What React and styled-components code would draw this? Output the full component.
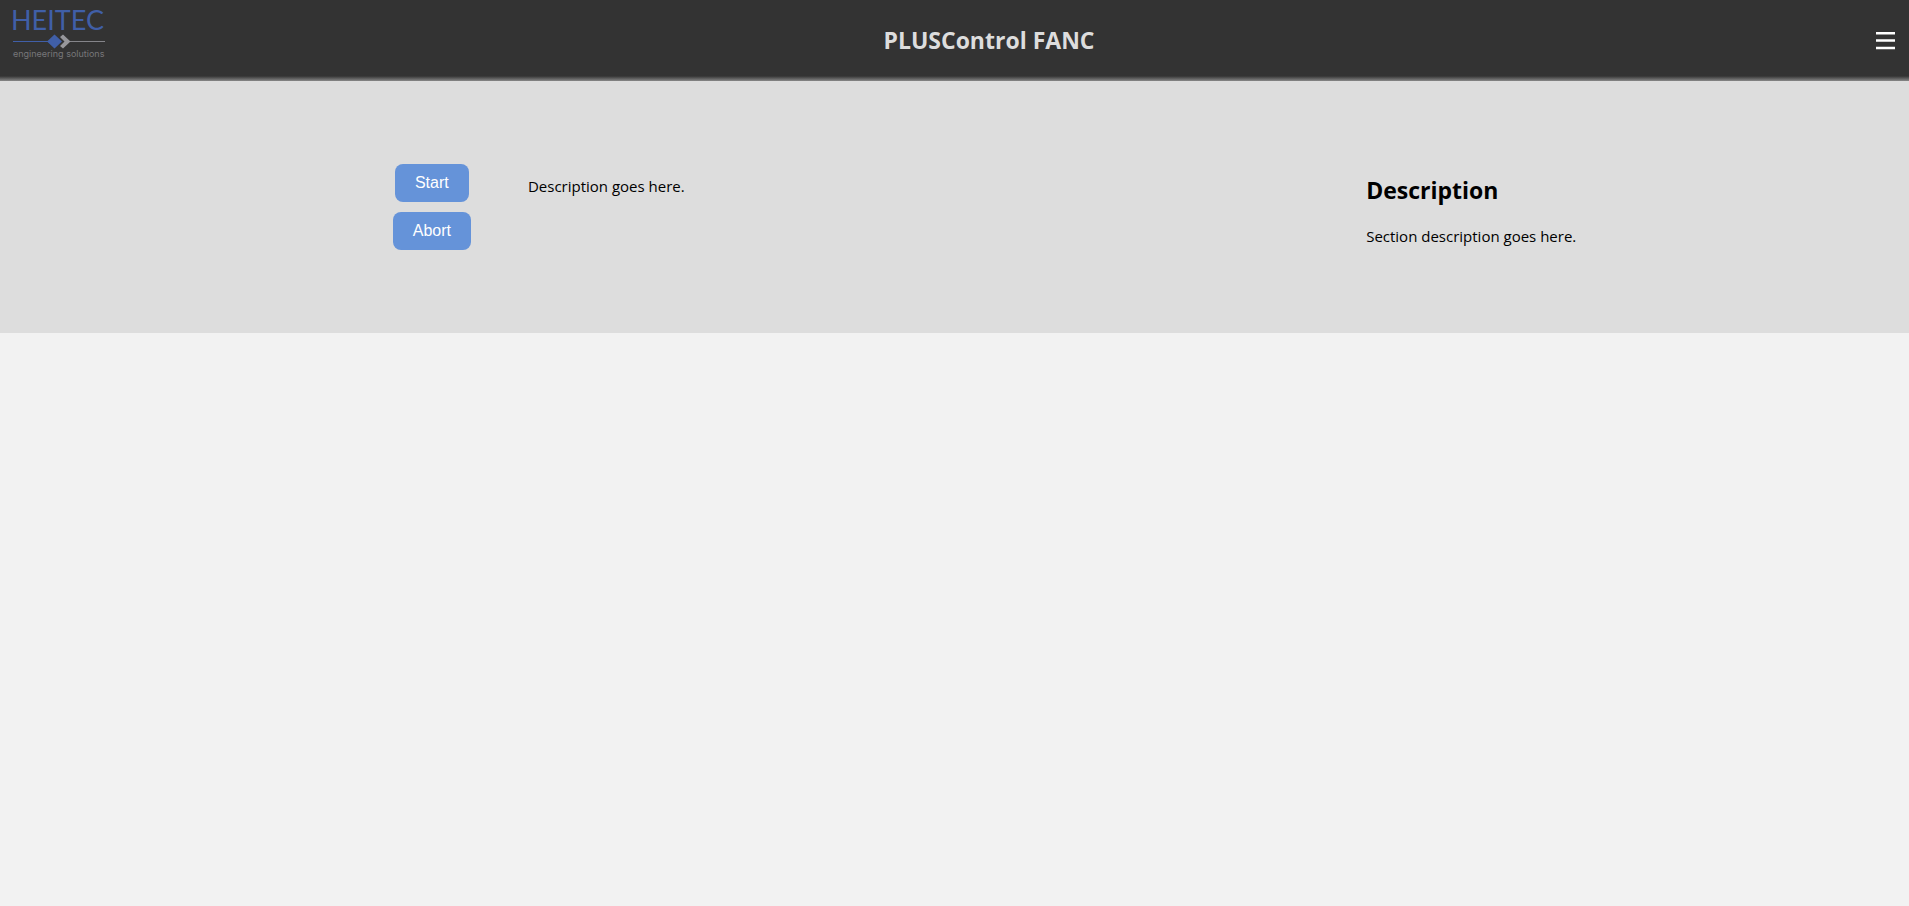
import React from 'react';
import styled, { createGlobalStyle } from 'styled-components';

const GlobalStyle = createGlobalStyle`
  body {
    margin: 0;
    background: #f2f2f2;
    color: #000;
    font-family: "Segoe UI", "Open Sans", "Noto Sans", sans-serif;
    font-size: 15px;
    line-height: 22px;
  }
`;

const Header = styled.header`
  display: flex;
  align-items: center;
  justify-content: space-between;
  box-sizing: border-box;
  height: 81px;
  padding: 0 13px 1px 12px;
  background: linear-gradient(to top, #888 0, #333 5px);
  color: #ddd;
`;

const Logo = styled.svg`
  display: block;
  width: 94px;
  height: 60px;
  margin-bottom: 20px;
  overflow: visible;
`;

const Title = styled.h1`
  margin: 0;
  font-size: 23px;
  line-height: 32px;
  font-weight: 700;
`;

const MenuButton = styled.button`
  display: flex;
  padding: 0;
  border: 0;
  background: none;
  color: #fff;
  cursor: pointer;
`;

const Section = styled.section`
  display: flex;
  justify-content: space-around;
  align-items: flex-start;
  padding: 83px 20px;
  background: #ddd;
`;

const Controls = styled.div`
  display: flex;
  gap: 57px;
  padding: 0 56px 0 60px;
`;

const ButtonColumn = styled.div`
  display: flex;
  flex-direction: column;
  align-items: center;
  gap: 10px;
`;

const ActionButton = styled.button`
  padding: 10px 20px;
  border: 0;
  border-radius: 8px;
  background: #6593d9;
  color: #fff;
  font-family: Arial, "Liberation Sans", sans-serif;
  font-size: 16px;
  line-height: 18px;
  cursor: pointer;
`;

const Text = styled.p`
  margin: 0;
`;

const ControlText = styled(Text)`
  padding-top: 11px;
`;

const Info = styled.div`
  padding-top: 10px;
`;

const InfoTitle = styled.h2`
  margin: 0 0 19px;
  font-size: 23px;
  line-height: 32px;
  font-weight: 700;
`;

export default function App() {
  return (
    <>
      <GlobalStyle />
      <Header>
        <Logo viewBox="0 0 94 60" role="img" aria-label="HEITEC engineering solutions">
          <text x="-1" y="30" fontFamily="Lato, sans-serif" fontSize="27" fill="#405fa8">HEITEC</text>
          <path d="M1 41.5H36" stroke="#405fa8" />
          <path d="M58 41.5H93" stroke="#85858a" />
          <path d="M35 41.5L42.5 34.5L50 41.5L42.5 48.5Z" fill="#405fa8" />
          <path d="M48 37L51 34.5L58.5 41.5L51 48.5L48 46L52.5 41.5Z" fill="#97979b" />
          <text x="1" y="57" fontFamily="Inter, sans-serif" fontSize="9" fill="#77777a">engineering solutions</text>
        </Logo>
        <Title>PLUSControl FANC</Title>
        <MenuButton type="button" aria-label="Menu">
          <svg width="24" height="20" viewBox="0 0 24 20" aria-hidden="true">
            <path d="M4 3.2H23M4 10.5H23M4 18H23" stroke="currentColor" strokeWidth="2.4" />
          </svg>
        </MenuButton>
      </Header>
      <main>
        <Section>
          <Controls>
            <ButtonColumn>
              <ActionButton type="button">Start</ActionButton>
              <ActionButton type="button">Abort</ActionButton>
            </ButtonColumn>
            <ControlText>Description goes here.</ControlText>
          </Controls>
          <Info>
            <InfoTitle>Description</InfoTitle>
            <Text>Section description goes here.</Text>
          </Info>
        </Section>
      </main>
    </>
  );
}
